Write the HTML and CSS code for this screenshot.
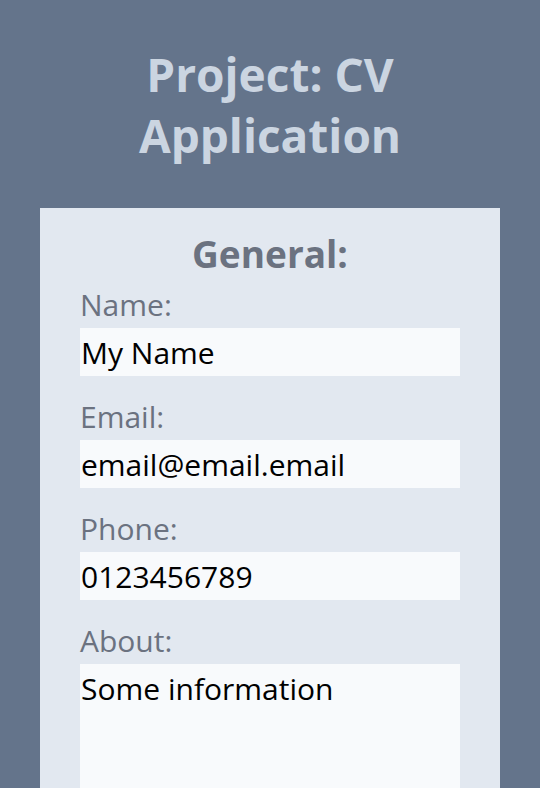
FILE: index.html
```html
<!DOCTYPE html>
<html lang="en">
<head>
<meta charset="utf-8">
<title>Project: CV Application</title>
<link rel="stylesheet" href="styles.css">
</head>
<body>
  <header class="page-header">
    <h1 class="page-title">Project: CV Application</h1>
  </header>
  <main class="card">
    <h2 class="card-title">General:</h2>
    <form class="form">
      <div class="field">
        <label class="field-label" for="name">Name:</label>
        <input class="field-input" id="name" type="text" value="My Name">
      </div>
      <div class="field">
        <label class="field-label" for="email">Email:</label>
        <input class="field-input" id="email" type="email" value="email@email.email">
      </div>
      <div class="field">
        <label class="field-label" for="phone">Phone:</label>
        <input class="field-input" id="phone" type="tel" value="0123456789">
      </div>
      <div class="field">
        <label class="field-label" for="about">About:</label>
        <textarea class="field-input field-textarea" id="about">Some information</textarea>
      </div>
    </form>
  </main>
</body>
</html>
```

FILE: styles.css
```css
html, body {
  margin: 0;
  padding: 0;
}

body {
  background: #64748b;
  font-family: "Open Sans", "Noto Sans", sans-serif;
  display: flex;
  flex-direction: column;
  align-items: center;
}

.page-header {
  padding-top: 44px;
  width: 100%;
  display: flex;
  justify-content: center;
}

.page-title {
  margin: 0;
  width: 300px;
  text-align: center;
  color: #cbd5e1;
  font-size: 46px;
  line-height: 61px;
  font-weight: 700;
}

.card {
  margin-top: 42px;
  width: 460px;
  box-sizing: border-box;
  background: #e2e8f0;
  padding: 22px 40px 40px;
}

.card-title {
  margin: 0;
  text-align: center;
  color: #6b7280;
  font-size: 37px;
  line-height: 48px;
  font-weight: 700;
}

.form {
  display: flex;
  flex-direction: column;
  gap: 23px;
  margin-top: 9px;
}

.field {
  display: flex;
  flex-direction: column;
  gap: 5px;
}

.field-label {
  color: #6b7280;
  font-size: 30px;
  line-height: 36px;
}

.field-input {
  box-sizing: border-box;
  width: 100%;
  height: 48px;
  border: none;
  outline: none;
  background: #f8fafc;
  color: #000;
  font-family: inherit;
  font-size: 30px;
  padding: 0 1px;
  margin: 0;
}

.field-textarea {
  height: 200px;
  padding: 6px 1px;
  line-height: 37px;
  resize: vertical;
}
```
